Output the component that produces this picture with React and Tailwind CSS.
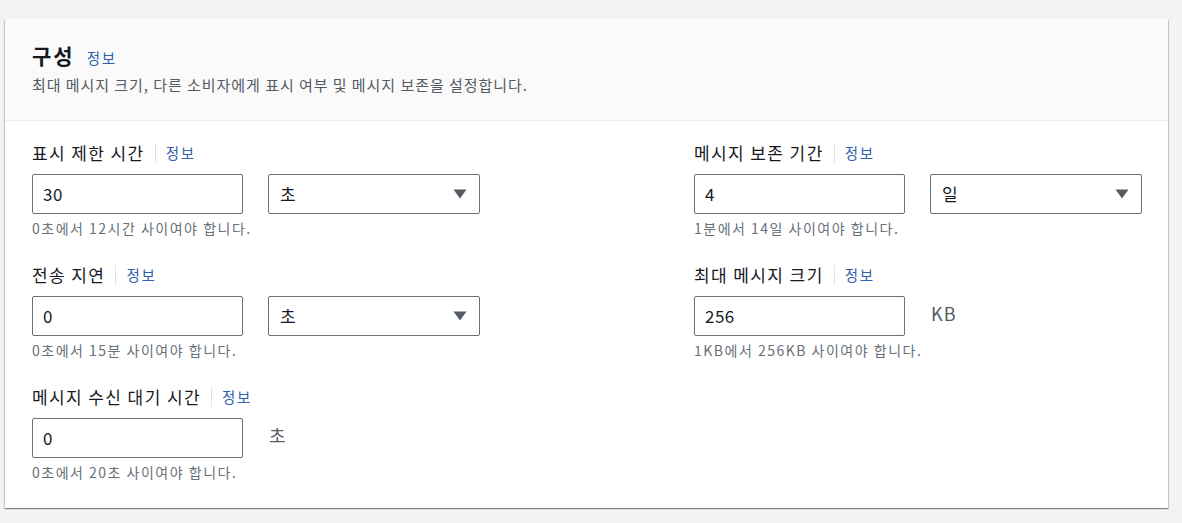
const FONT = { fontFamily: '"Noto Sans CJK KR", "Noto Sans", sans-serif' }

function Info() {
  return (
    <>
      <span className="mx-[10px] h-[20px] w-px bg-[#e1e4e4]" />
      <a href="#" className="text-[14.5px] tracking-[1.8px] text-[#2f5fad]">정보</a>
    </>
  )
}

function Label({ children }) {
  return (
    <div className="flex h-[22px] items-center">
      <span className="text-[17px] tracking-[1.4px] text-[#16191f]">{children}</span>
      <Info />
    </div>
  )
}

function Input({ value }) {
  return (
    <div className="flex h-[40px] w-[211px] items-center rounded-[2px] border border-[#687078] bg-white px-[10px] text-[17px] tracking-[0.5px] text-[#16191f]">
      {value}
    </div>
  )
}

function Select({ value }) {
  return (
    <div className="flex h-[40px] w-[212px] items-center justify-between rounded-[2px] border border-[#687078] bg-white pl-[11px] pr-[12px] text-[17px] text-[#16191f]">
      <span>{value}</span>
      <svg width="14" height="10" viewBox="0 0 14 10">
        <path d="M0.5 0.5 H13.5 L7 9.5 Z" fill="#545b64" />
      </svg>
    </div>
  )
}

function Unit({ children }) {
  return (
    <div className="flex h-[40px] items-center pl-[1px] text-[18px] tracking-[1px] text-[#545b64]">
      <span className="-mt-[5px]">{children}</span>
    </div>
  )
}

function Field({ label, value, unit, select, help }) {
  return (
    <div className="flex flex-col">
      <Label>{label}</Label>
      <div className="mt-[10px] flex gap-[25px]">
        <Input value={value} />
        {select ? <Select value={unit} /> : <Unit>{unit}</Unit>}
      </div>
      <div className="mt-[5px] h-[18px] text-[14px] leading-[18px] tracking-[1.5px] text-[#687078]">{help}</div>
    </div>
  )
}

export default function App() {
  return (
    <div className="min-h-screen bg-[#f2f3f3] pt-[19px]" style={FONT}>
      <div className="ml-[5px] w-[1163px] bg-white shadow-[0_1px_1px_0_rgba(0,28,36,0.3),1px_1px_1px_0_rgba(0,28,36,0.15),-1px_1px_1px_0_rgba(0,28,36,0.15)]">
        <div className="border-b border-[#eaeded] bg-[#fafafa] px-[27px] pb-[25px] pt-[22px]">
          <div className="flex items-baseline">
            <h2 className="text-[21px] font-bold leading-[28px] tracking-[2px] text-[#16191f]">구성</h2>
            <a href="#" className="ml-[12px] text-[14.5px] tracking-[1.8px] text-[#2f5fad]">정보</a>
          </div>
          <p className="mt-[6px] text-[15px] leading-[20px] tracking-[0.95px] text-[#545b64]">
            최대 메시지 크기, 다른 소비자에게 표시 여부 및 메시지 보존을 설정합니다.
          </p>
        </div>
        <div className="grid grid-cols-[448px_448px] gap-x-[214px] gap-y-[27px] px-[27px] pb-[27px] pt-[21px]">
          <Field label="표시 제한 시간" value="30" unit="초" select help="0초에서 12시간 사이여야 합니다." />
          <Field label="메시지 보존 기간" value="4" unit="일" select help="1분에서 14일 사이여야 합니다." />
          <Field label="전송 지연" value="0" unit="초" select help="0초에서 15분 사이여야 합니다." />
          <Field label="최대 메시지 크기" value="256" unit="KB" help="1KB에서 256KB 사이여야 합니다." />
          <Field label="메시지 수신 대기 시간" value="0" unit="초" help="0초에서 20초 사이여야 합니다." />
        </div>
      </div>
    </div>
  )
}
